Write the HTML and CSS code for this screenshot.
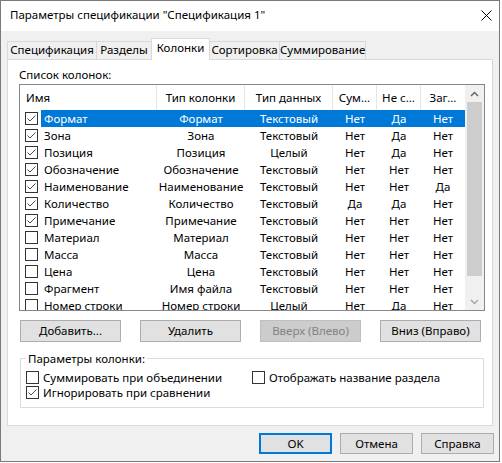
FILE: index.html
```html
<!DOCTYPE html>
<html lang="ru">
<head>
<meta charset="utf-8">
<title>Параметры спецификации</title>
<link rel="stylesheet" href="styles.css">
</head>
<body>
<div class="window">
  <div class="titlebar">
    <span class="title">Параметры спецификации "Спецификация 1"</span>
    <svg class="close" width="11" height="11" viewBox="0 0 11 11"><path d="M0.5 0.5 L10.5 10.5 M10.5 0.5 L0.5 10.5" stroke="#000" stroke-width="1" fill="none"/></svg>
  </div>
  <div class="body">
    <div class="tabs">
      <div class="tab t1">Спецификация</div>
      <div class="tab t2">Разделы</div>
      <div class="tab t3 active">Колонки</div>
      <div class="tab t4">Сортировка</div>
      <div class="tab t5">Суммирование</div>
    </div>
    <div class="panel">
      <div class="label">Список колонок:</div>
      <div class="list">
        <div class="list-main">
          <div class="header">
            <div class="hcell c-name-h">Имя</div>
            <div class="hcell c-type">Тип колонки</div>
            <div class="hcell c-type">Тип данных</div>
            <div class="hcell c-s">Сум...</div>
            <div class="hcell c-s">Не с...</div>
            <div class="hcell c-s">Заг...</div>
          </div>
          <div class="rows">
            <div class="row sel"><span class="chkcell"><span class="cb on"><svg viewBox="0 0 11 11"><path d="M1.5 5.5 L4 8 L9.5 2.5"/></svg></span></span><span class="cells"><span class="c-name">Формат</span><span class="c-type">Формат</span><span class="c-type">Текстовый</span><span class="c-s">Нет</span><span class="c-s">Да</span><span class="c-s">Нет</span></span></div>
            <div class="row"><span class="chkcell"><span class="cb on"><svg viewBox="0 0 11 11"><path d="M1.5 5.5 L4 8 L9.5 2.5"/></svg></span></span><span class="cells"><span class="c-name">Зона</span><span class="c-type">Зона</span><span class="c-type">Текстовый</span><span class="c-s">Нет</span><span class="c-s">Да</span><span class="c-s">Нет</span></span></div>
            <div class="row"><span class="chkcell"><span class="cb on"><svg viewBox="0 0 11 11"><path d="M1.5 5.5 L4 8 L9.5 2.5"/></svg></span></span><span class="cells"><span class="c-name">Позиция</span><span class="c-type">Позиция</span><span class="c-type">Целый</span><span class="c-s">Нет</span><span class="c-s">Да</span><span class="c-s">Нет</span></span></div>
            <div class="row"><span class="chkcell"><span class="cb on"><svg viewBox="0 0 11 11"><path d="M1.5 5.5 L4 8 L9.5 2.5"/></svg></span></span><span class="cells"><span class="c-name">Обозначение</span><span class="c-type">Обозначение</span><span class="c-type">Текстовый</span><span class="c-s">Нет</span><span class="c-s">Нет</span><span class="c-s">Нет</span></span></div>
            <div class="row"><span class="chkcell"><span class="cb on"><svg viewBox="0 0 11 11"><path d="M1.5 5.5 L4 8 L9.5 2.5"/></svg></span></span><span class="cells"><span class="c-name">Наименование</span><span class="c-type">Наименование</span><span class="c-type">Текстовый</span><span class="c-s">Нет</span><span class="c-s">Нет</span><span class="c-s">Да</span></span></div>
            <div class="row"><span class="chkcell"><span class="cb on"><svg viewBox="0 0 11 11"><path d="M1.5 5.5 L4 8 L9.5 2.5"/></svg></span></span><span class="cells"><span class="c-name">Количество</span><span class="c-type">Количество</span><span class="c-type">Текстовый</span><span class="c-s">Да</span><span class="c-s">Да</span><span class="c-s">Нет</span></span></div>
            <div class="row"><span class="chkcell"><span class="cb on"><svg viewBox="0 0 11 11"><path d="M1.5 5.5 L4 8 L9.5 2.5"/></svg></span></span><span class="cells"><span class="c-name">Примечание</span><span class="c-type">Примечание</span><span class="c-type">Текстовый</span><span class="c-s">Нет</span><span class="c-s">Нет</span><span class="c-s">Нет</span></span></div>
            <div class="row"><span class="chkcell"><span class="cb"></span></span><span class="cells"><span class="c-name">Материал</span><span class="c-type">Материал</span><span class="c-type">Текстовый</span><span class="c-s">Нет</span><span class="c-s">Нет</span><span class="c-s">Нет</span></span></div>
            <div class="row"><span class="chkcell"><span class="cb"></span></span><span class="cells"><span class="c-name">Масса</span><span class="c-type">Масса</span><span class="c-type">Текстовый</span><span class="c-s">Нет</span><span class="c-s">Нет</span><span class="c-s">Нет</span></span></div>
            <div class="row"><span class="chkcell"><span class="cb"></span></span><span class="cells"><span class="c-name">Цена</span><span class="c-type">Цена</span><span class="c-type">Текстовый</span><span class="c-s">Нет</span><span class="c-s">Нет</span><span class="c-s">Нет</span></span></div>
            <div class="row"><span class="chkcell"><span class="cb"></span></span><span class="cells"><span class="c-name">Фрагмент</span><span class="c-type">Имя файла</span><span class="c-type">Текстовый</span><span class="c-s">Нет</span><span class="c-s">Нет</span><span class="c-s">Нет</span></span></div>
            <div class="row"><span class="chkcell"><span class="cb"></span></span><span class="cells"><span class="c-name">Номер строки</span><span class="c-type">Номер строки</span><span class="c-type">Целый</span><span class="c-s">Нет</span><span class="c-s">Да</span><span class="c-s">Нет</span></span></div>
          </div>
        </div>
        <div class="scrollbar">
          <div class="sb-btn up"><svg width="9" height="6" viewBox="0 0 9 6"><path d="M1 5 L4.5 1.5 L8 5"/></svg></div>
          <div class="sb-track"><div class="sb-thumb"></div></div>
          <div class="sb-btn down"><svg width="9" height="6" viewBox="0 0 9 6"><path d="M1 1 L4.5 4.5 L8 1"/></svg></div>
        </div>
      </div>
      <div class="btn-row">
        <button class="btn">Добавить...</button>
        <button class="btn">Удалить</button>
        <button class="btn disabled">Вверх (Влево)</button>
        <button class="btn">Вниз (Вправо)</button>
      </div>
      <fieldset class="group">
        <legend>Параметры колонки:</legend>
        <div class="opts">
          <label class="opt"><span class="cb"></span><span>Суммировать при объединении</span></label>
          <label class="opt"><span class="cb"></span><span>Отображать название раздела</span></label>
          <label class="opt"><span class="cb on"><svg viewBox="0 0 11 11"><path d="M1.5 5.5 L4 8 L9.5 2.5"/></svg></span><span>Игнорировать при сравнении</span></label>
        </div>
      </fieldset>
    </div>
    <div class="footer">
      <button class="btn small default">OK</button>
      <button class="btn small">Отмена</button>
      <button class="btn small">Справка</button>
    </div>
  </div>
</div>
</body>
</html>
```
FILE: styles.css
```css
* { box-sizing: border-box; }
html, body { margin: 0; padding: 0; background: #ffffff; }
body {
  font-family: "Noto Sans", "Open Sans", sans-serif;
  font-size: 11.5px;
  color: #000;
}
.window {
  width: 500px;
  height: 462px;
  border: 1px solid #7a7a7a;
  display: flex;
  flex-direction: column;
  background: #f0f0f0;
}
.titlebar {
  height: 30px;
  flex: none;
  background: #fff;
  display: flex;
  align-items: center;
  justify-content: space-between;
  padding: 0 7px 2px 9px;
}
.title { line-height: 16px; }
.close { display: block; }
.body {
  flex: 1;
  padding: 7px 5px 0 6px;
  display: flex;
  flex-direction: column;
}
.tabs {
  display: flex;
  align-items: flex-end;
  height: 21px;
  flex: none;
}
.tab {
  height: 18px;
  border: 1px solid #d9d9d9;
  border-bottom: none;
  background: #f0f0f0;
  margin-left: -1px;
  text-align: center;
  line-height: 16px;
  white-space: nowrap;
}
.t1 { width: 90px; margin-left: 0; }
.t2 { width: 56px; }
.t3 { width: 59px; }
.t4 { width: 71px; }
.t5 { width: 87px; }
.tab.active {
  height: 22px;
  margin-bottom: -1px;
  background: #fff;
  line-height: 18px;
  position: relative;
  z-index: 2;
}
.panel {
  width: 486px;
  height: 367px;
  flex: none;
  border: 1px solid #d9d9d9;
  background: #fff;
  padding: 7px 0 0 11px;
}
.label { line-height: 15px; height: 15px; }
.list {
  margin-top: 2px;
  width: 466px;
  height: 227px;
  border: 1px solid #828790;
  display: flex;
}
.list-main { width: 445px; overflow: hidden; }
.header { display: flex; height: 25px; }
.hcell {
  border-right: 1px solid #e5e5e5;
  display: flex;
  align-items: center;
  justify-content: center;
  padding: 0 5px;
  white-space: nowrap;
  overflow: hidden;
}
.hcell.c-name-h { width: 137px; justify-content: flex-start; padding-left: 6px; }
.hcell.c-s:last-child { border-right: none; }
.c-type { width: 88px; flex: none; text-align: center; white-space: nowrap; }
.c-s { width: 44px; flex: none; text-align: center; white-space: nowrap; }
.rows { display: flex; flex-direction: column; }
.row { display: flex; height: 17px; line-height: 17px; flex: none; }
.chkcell { width: 21px; flex: none; display: flex; align-items: center; padding-left: 5px; }
.cells { display: flex; flex: 1; }
.c-name { width: 116px; flex: none; padding-left: 3px; white-space: nowrap; }
.row.sel .cells { background: #0078d7; color: #fff; }
.cb {
  width: 13px;
  height: 13px;
  flex: none;
  border: 1px solid #333;
  background: #fff;
  display: block;
}
.cb svg { display: block; width: 11px; height: 11px; }
.cb svg path { fill: none; stroke: #4a4a4a; stroke-width: 1; }
.scrollbar {
  width: 19px;
  background: #f0f0f0;
  display: flex;
  flex-direction: column;
}
.sb-btn { height: 17px; flex: none; display: flex; align-items: center; justify-content: center; }
.sb-btn svg path { fill: none; stroke-width: 1.4; }
.sb-btn.up svg path { stroke: #606060; }
.sb-btn.down svg path { stroke: #a3a3a3; }
.sb-track { flex: 1; padding: 0 2px; }
.sb-thumb { height: 174px; background: #cdcdcd; }
.btn-row {
  margin-top: 9px;
  margin-left: 1px;
  display: flex;
  gap: 19px;
}
.btn {
  width: 101px;
  height: 22px;
  border: 1px solid #adadad;
  background: #e1e1e1;
  font: inherit;
  color: #000;
  text-align: center;
  padding: 0;
  line-height: 20px;
}
.btn.disabled { background: #cccccc; border-color: #bfbfbf; color: #838383; }
.group {
  margin: 9px 0 0 1px;
  width: 464px;
  min-width: 0;
  border: 1px solid #dcdcdc;
  padding: 0 5px 7px 5px;
}
.group legend { padding: 0 2px; line-height: 15px; }
.opts {
  display: grid;
  grid-template-columns: 226px 1fr;
  padding-top: 4px;
}
.opt { display: flex; align-items: center; gap: 4px; height: 15px; line-height: 15px; white-space: nowrap; }
.footer {
  margin-top: 7px;
  display: flex;
  justify-content: flex-end;
  gap: 8px;
}
.btn.small { width: 73px; height: 21px; line-height: 19px; }
.btn.default { border: 2px solid #0078d7; line-height: 17px; }
```
